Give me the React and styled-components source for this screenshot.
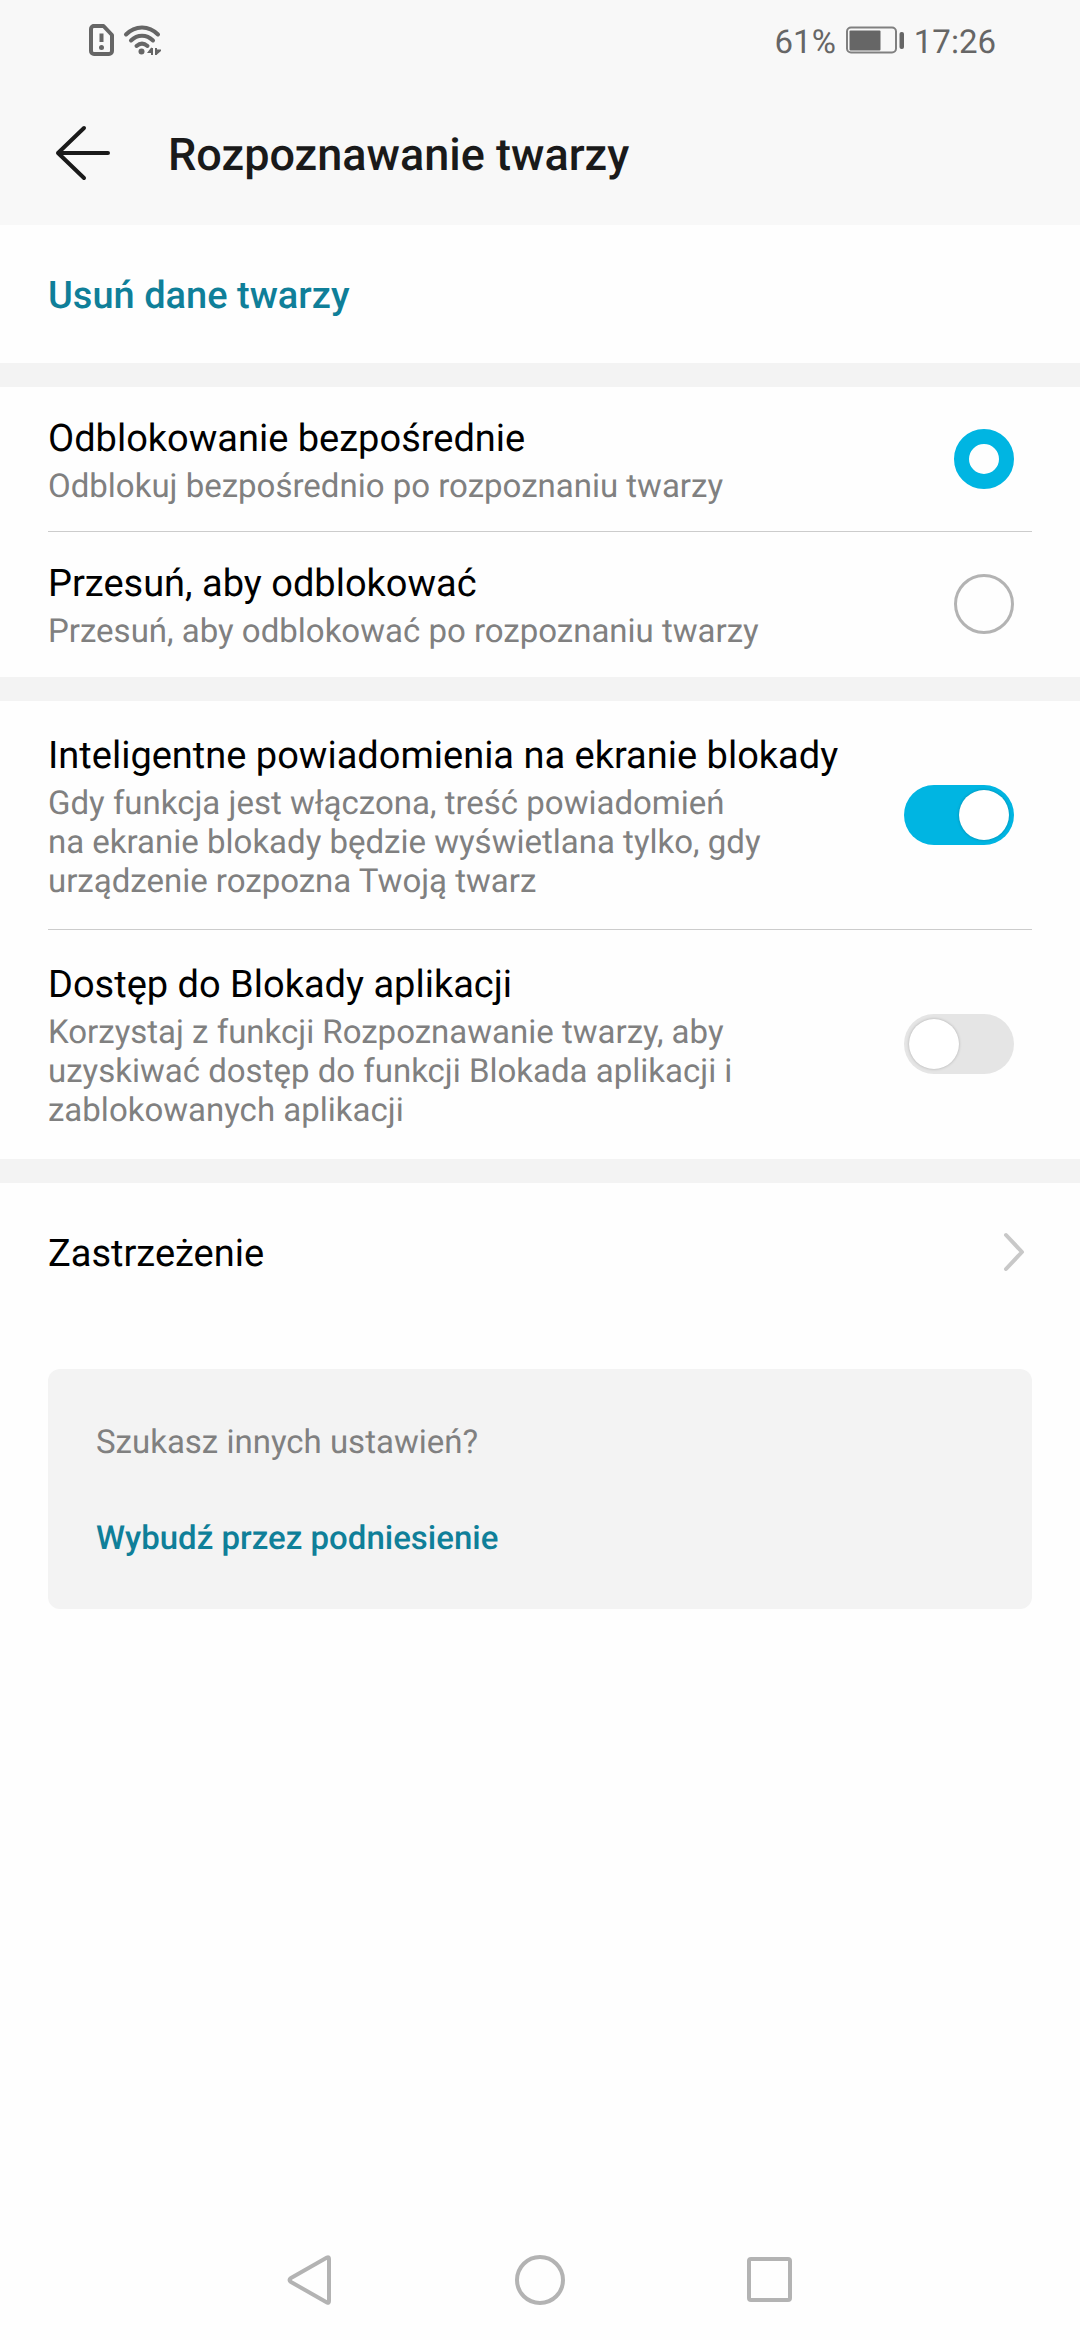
import React from 'react';
import styled, { createGlobalStyle } from 'styled-components'

const GlobalStyle = createGlobalStyle`
  * {
    box-sizing: border-box;
  }
  body {
    margin: 0;
    background-color: #fefefe;
    font-family: Roboto, "Noto Sans", sans-serif;
    text-rendering: geometricPrecision;
  }
`

const ScreenContainer = styled.div`
display: flex;
flex-direction: column;
min-height: 100vh;
`

// STATUS BAR AND HEADER
const TopArea = styled.header`
background-color: #f8f8f8;
`

const StatusBar = styled.div`
display: flex;
justify-content: space-between;
align-items: center;
height: 80px;
padding: 0 84px 0 88px;
color: #666666;
font-size: 33px;
line-height: 39px;
`

const StatusGroup = styled.div`
display: flex;
align-items: center;
gap: 8px;
`

const StatusText = styled.span`
padding-top: 4px;
`

const TitleBar = styled.div`
display: flex;
align-items: center;
gap: 56px;
height: 145px;
padding: 0 48px 0 52px;
`

const BackButton = styled.button`
display: flex;
padding: 0;
border: none;
background: none;
`

const PageTitle = styled.h1`
margin: 0;
padding-top: 4px;
color: #1a1a1a;
font-size: 45px;
line-height: 60px;
font-weight: 500;
`

// SETTINGS LIST
const Section = styled.section`
border-bottom: ${(props) => props.$last ? 'none' : '24px solid #f3f3f3'};
`

const ActionButton = styled.button`
display: flex;
justify-content: space-between;
align-items: center;
width: 100%;
height: 138px;
padding: 0 48px;
border: none;
background: none;
color: ${(props) => props.$accent ? '#0f7f99' : '#000000'};
font-family: inherit;
font-size: 38px;
line-height: 46px;
font-weight: ${(props) => props.$accent ? 500 : 400};
text-align: left;
text-rendering: inherit;
`

const ActionLabel = styled.span`
padding-top: 4px;
`

const SettingRow = styled.label`
display: flex;
align-items: center;
gap: 24px;
margin: 0 48px;
padding: ${(props) => props.$tall ? '28px 18px 28px 0' : '25px 18px 25px 0'};
border-bottom: 1px solid ${(props) => props.$divider ? '#cccccc' : 'transparent'};
`

const RowText = styled.span`
display: flex;
flex: 1;
flex-direction: column;
gap: 5px;
padding-top: 4px;
`

const RowTitle = styled.span`
color: #000000;
font-size: 38px;
line-height: 46px;
`

const RowDescription = styled.span`
color: #808080;
font-size: 33px;
line-height: 39px;
`

const Radio = styled.input`
appearance: none;
flex: none;
width: 60px;
height: 60px;
margin: 0;
border: 3px solid #b3b3b3;
border-radius: 50%;

&:checked {
  border: 15px solid #00b5e2;
}
`

const Switch = styled.input`
appearance: none;
display: flex;
flex: none;
width: 110px;
height: 60px;
margin: 0;
padding: 5px;
border-radius: 30px;
background-color: #e5e5e5;

&::before {
  content: "";
  width: 50px;
  height: 50px;
  border-radius: 50%;
  background-color: #ffffff;
  box-shadow: 0 0 3px rgba(0, 0, 0, 0.25);
}

&:checked {
  justify-content: flex-end;
  background-color: #00b5e2;
}
`

// SUGGESTIONS CARD
const SuggestionCard = styled.aside`
display: flex;
flex-direction: column;
align-items: flex-start;
gap: 57px;
margin: 48px;
padding: 54px 48px 51px;
border-radius: 12px;
background-color: #f3f3f3;
font-size: 33px;
line-height: 39px;
`

const SuggestionQuestion = styled.p`
margin: 0;
color: #808080;
`

const SuggestionLink = styled.a`
color: #0f7f99;
font-weight: 500;
text-decoration: none;
`

const NavigationBar = styled.nav`
display: flex;
justify-content: center;
margin-top: auto;
`

const NavigationButton = styled.button`
display: flex;
align-items: center;
justify-content: center;
width: 230px;
height: 120px;
padding: 0;
border: none;
background: none;
`

const SimIcon = () => (
  <svg width="27" height="34" viewBox="0 0 27 34" fill="none" stroke="#666666" strokeWidth="4">
    <path d="M5 3H15.500L24 12V28a3 3 0 0 1-3 3H6a3 3 0 0 1-3-3V6a3 3 0 0 1 3-3z" strokeLinejoin="round" />
    <path d="M13.500 10.500V19" />
    <circle cx="13.500" cy="24.500" r="2.500" fill="#666666" stroke="none" />
  </svg>
)

const WifiIcon = () => (
  <svg width="38" height="34" viewBox="0 0 38 34" fill="none" stroke="#666666" strokeWidth="4" strokeLinecap="round">
    <path d="M3 11.500C12 2 26 2 35 11.500" />
    <path d="M8 17.500C14.500 11 23.500 11 30 17.500" />
    <path d="M13.500 23C17 20 21 20 24.500 23" />
    <circle cx="18.500" cy="28.500" r="3" fill="#666666" stroke="none" />
    <path d="M29 25V32M29 25L26 29H29M33 25V32M33 31L37 27.500H33" strokeWidth="2" strokeLinecap="butt" />
  </svg>
)

const BatteryIcon = () => (
  <svg width="62" height="28" viewBox="0 0 62 28" fill="none">
    <rect x="3" y="1.500" width="49" height="25" rx="4" stroke="#808080" strokeWidth="2" />
    <rect x="5.500" y="4.500" width="31" height="20" rx="1" fill="#666666" />
    <rect x="55.500" y="6" width="4.500" height="17" rx="2" fill="#666666" />
  </svg>
)

const ArrowIcon = () => (
  <svg width="60" height="60" viewBox="0 0 60 60" fill="none" stroke="#1a1a1a" strokeWidth="4" strokeLinecap="round" strokeLinejoin="round">
    <path d="M32 5L6 30L32 55M6 30H56" />
  </svg>
)

const ChevronIcon = () => (
  <svg width="30" height="44" viewBox="0 0 30 44" fill="none" stroke="#c8c8c8" strokeWidth="4" strokeLinecap="round" strokeLinejoin="round">
    <path d="M4 5L20 22L4 39" />
  </svg>
)

class App extends React.Component {
  state = {
    unlockMode: "direct",
    smartNotifications: true,
    appLock: false
  };

  onChangeMode = (event) => {
    this.setState({ unlockMode: event.target.value })
  }

  onChangeSwitch = (event) => {
    this.setState({ [event.target.name]: event.target.checked })
  }

  render() {
    return (
      <ScreenContainer>
        <GlobalStyle />

        <TopArea>
          <StatusBar>
            <StatusGroup>
              <SimIcon />
              <WifiIcon />
            </StatusGroup>
            <StatusGroup>
              <StatusText>61%</StatusText>
              <BatteryIcon />
              <StatusText>17:26</StatusText>
            </StatusGroup>
          </StatusBar>
          <TitleBar>
            <BackButton aria-label="Wstecz"><ArrowIcon /></BackButton>
            <PageTitle>Rozpoznawanie twarzy</PageTitle>
          </TitleBar>
        </TopArea>

        <main>
          <Section>
            <ActionButton $accent>
              <ActionLabel>Usuń dane twarzy</ActionLabel>
            </ActionButton>
          </Section>

          <Section>
            <SettingRow $divider>
              <RowText>
                <RowTitle>Odblokowanie bezpośrednie</RowTitle>
                <RowDescription>Odblokuj bezpośrednio po rozpoznaniu twarzy</RowDescription>
              </RowText>
              <Radio
                type="radio"
                name="unlockMode"
                value="direct"
                checked={this.state.unlockMode === "direct"}
                onChange={this.onChangeMode}
              />
            </SettingRow>
            <SettingRow>
              <RowText>
                <RowTitle>Przesuń, aby odblokować</RowTitle>
                <RowDescription>Przesuń, aby odblokować po rozpoznaniu twarzy</RowDescription>
              </RowText>
              <Radio
                type="radio"
                name="unlockMode"
                value="swipe"
                checked={this.state.unlockMode === "swipe"}
                onChange={this.onChangeMode}
              />
            </SettingRow>
          </Section>

          <Section>
            <SettingRow $tall $divider>
              <RowText>
                <RowTitle>Inteligentne powiadomienia na ekranie blokady</RowTitle>
                <RowDescription>
                  Gdy funkcja jest włączona, treść powiadomień na&nbsp;ekranie blokady będzie wyświetlana tylko, gdy urządzenie rozpozna Twoją twarz
                </RowDescription>
              </RowText>
              <Switch
                type="checkbox"
                name="smartNotifications"
                checked={this.state.smartNotifications}
                onChange={this.onChangeSwitch}
              />
            </SettingRow>
            <SettingRow $tall>
              <RowText>
                <RowTitle>Dostęp do Blokady aplikacji</RowTitle>
                <RowDescription>
                  Korzystaj z funkcji Rozpoznawanie twarzy, aby uzyskiwać dostęp do funkcji Blokada aplikacji i zablokowanych aplikacji
                </RowDescription>
              </RowText>
              <Switch
                type="checkbox"
                name="appLock"
                checked={this.state.appLock}
                onChange={this.onChangeSwitch}
              />
            </SettingRow>
          </Section>

          <Section $last>
            <ActionButton>
              <ActionLabel>Zastrzeżenie</ActionLabel>
              <ChevronIcon />
            </ActionButton>
          </Section>

          <SuggestionCard>
            <SuggestionQuestion>Szukasz innych ustawień?</SuggestionQuestion>
            <SuggestionLink href="#">Wybudź przez podniesienie</SuggestionLink>
          </SuggestionCard>
        </main>

        <NavigationBar>
          <NavigationButton aria-label="Wstecz">
            <svg width="46" height="54" viewBox="0 0 46 54" fill="none" stroke="#b3b3b3" strokeWidth="4" strokeLinejoin="round">
              <path d="M40 4.500Q42 3.500 42 6V48Q42 50.500 40 49.500L4 29Q1 27 4 25z" />
            </svg>
          </NavigationButton>
          <NavigationButton aria-label="Ekran główny">
            <svg width="54" height="54" viewBox="0 0 54 54" fill="none" stroke="#b3b3b3" strokeWidth="4">
              <circle cx="27" cy="27" r="23" />
            </svg>
          </NavigationButton>
          <NavigationButton aria-label="Ostatnie aplikacje">
            <svg width="48" height="48" viewBox="0 0 48 48" fill="none" stroke="#b3b3b3" strokeWidth="4">
              <rect x="3" y="3" width="41" height="41" rx="2" />
            </svg>
          </NavigationButton>
        </NavigationBar>
      </ScreenContainer>
    )
  }
}

export default App
